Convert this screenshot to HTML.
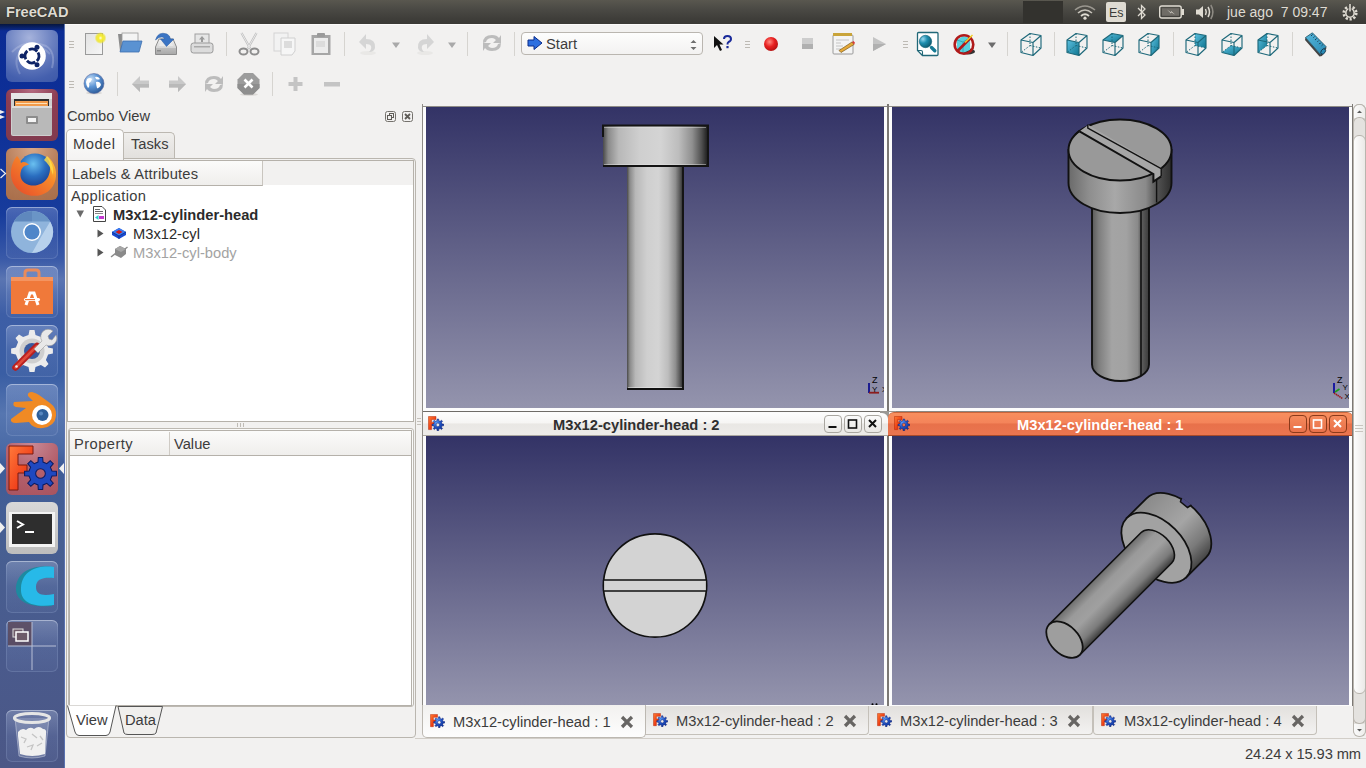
<!DOCTYPE html>
<html><head><meta charset="utf-8">
<style>
*{box-sizing:border-box;margin:0;padding:0}
html,body{width:1366px;height:768px;overflow:hidden;background:#f2f1f0;font-family:"Liberation Sans",sans-serif;color:#3c3c3c}
.a{position:absolute}
#panel{left:0;top:0;width:1366px;height:24px;background:linear-gradient(#59574f,#4a4944 40%,#3e3d39 80%,#3a3935)}
#launcher{left:0;top:24px;width:65px;height:744px;background:linear-gradient(180deg,#06163f 0px,#0b2c94 7px,#0e3098 100px,#173c9c 190px,#3a5aa8 235px,#5a75b2 255px,#3d5ea6 290px,#3a5ea4 350px,#5676b0 390px,#4a6aa6 425px,#3e5c98 440px,#475f92 520px,#4a5a8c 640px,#4b5786 744px);border-right:1px solid #5a72b0}
.tile{position:absolute;left:6px;width:52px;height:52px;border-radius:6px;overflow:hidden}
.t{position:absolute;white-space:nowrap;font-size:14.7px;line-height:1}
.sep{position:absolute;width:1px;background:#d6d4d0}
.grip{position:absolute;width:5px;height:8px;background:repeating-linear-gradient(#bdbab4 0 1px,transparent 1px 3px)}
.view{position:absolute;background:linear-gradient(#333366,#9494ad)}
.glass{background:linear-gradient(180deg,rgba(200,212,240,.30),rgba(140,160,210,.16) 50%,rgba(110,130,180,.14));box-shadow:inset 0 0 0 1px rgba(200,215,250,.16),inset 0 1px 0 rgba(255,255,255,.35)}
.tb{position:absolute;top:415px;width:18px;height:18px;border:1px solid #a9a6a0;border-radius:4px;background:linear-gradient(#fbfbfb,#e9e7e4)}
.tb.o{border-color:#8a3a1a;background:linear-gradient(#f58a5c,#e8714a)}
</style></head><body>
<svg width="0" height="0" style="position:absolute">
 <defs>
  <g id="fcicon"><defs><linearGradient id="fcF" x1="0" y1="0" x2="1" y2="1"><stop offset="0" stop-color="#ff7a30"/><stop offset="1" stop-color="#e01000"/></linearGradient><radialGradient id="fcG" cx=".35" cy=".3" r=".8"><stop offset="0" stop-color="#5a9af8"/><stop offset=".5" stop-color="#2050c0"/><stop offset="1" stop-color="#0a2a8a"/></radialGradient></defs><path d="M0.5 0.5 H8.5 V3.8 H3.8 V6.8 H6.5 V10 H3.8 V14.5 H0.5Z" fill="url(#fcF)" stroke="#b02000" stroke-width=".5"/><path fill="url(#fcG)" fill-rule="evenodd" stroke="#0a1a70" stroke-width=".5" d="M14.99 8.51 L16.74 8.64 L16.74 10.36 L14.99 10.49 L14.37 11.98 L15.52 13.30 L14.30 14.52 L12.98 13.37 L11.49 13.99 L11.36 15.74 L9.64 15.74 L9.51 13.99 L8.02 13.37 L6.70 14.52 L5.48 13.30 L6.63 11.98 L6.01 10.49 L4.26 10.36 L4.26 8.64 L6.01 8.51 L6.63 7.02 L5.48 5.70 L6.70 4.48 L8.02 5.63 L9.51 5.01 L9.64 3.26 L11.36 3.26 L11.49 5.01 L12.98 5.63 L14.30 4.48 L15.52 5.70 L14.37 7.02Z M12.4 9.5 A1.9 1.9 0 1 0 8.6 9.5 A1.9 1.9 0 1 0 12.4 9.5Z"/></g>
  <g id="tabx"><path d="M3.2 3.2 L10.8 10.8 M10.8 3.2 L3.2 10.8" stroke="#676563" stroke-width="3.3" stroke-linecap="square"/></g>
 </defs>
</svg>
<!-- top panel -->
<div id="panel" class="a">
  <div class="t" style="left:6px;top:5px;font-weight:bold;font-size:14.6px;color:#dfdbd2;text-shadow:0 0 1.5px rgba(0,0,0,.7)">FreeCAD</div>
  <div class="a" style="left:1023px;top:1px;width:40px;height:22px;background:#33322e"></div>
  <svg class="a" style="left:1074px;top:4px" width="22" height="16" viewBox="0 0 22 16"><path d="M1 6 Q11 -2 21 6" fill="none" stroke="#9a978f" stroke-width="1.6"/><path d="M4 9 Q11 3 18 9" fill="none" stroke="#c8c4bb" stroke-width="1.6"/><path d="M7 12 Q11 8.5 15 12" fill="none" stroke="#dfdbd2" stroke-width="1.8"/><circle cx="11" cy="14.2" r="1.6" fill="#dfdbd2"/></svg>
  <div class="a" style="left:1106px;top:2px;width:20px;height:20px;background:#dfdbd2;border-radius:2px"></div>
  <div class="t" style="left:1109px;top:7px;font-size:12.5px;color:#3c3b37">Es</div>
  <svg class="a" style="left:1136px;top:3px" width="11" height="18" viewBox="0 0 11 18"><path d="M2 5 L9 12 L5.5 15.5 V2.5 L9 6 L2 13" fill="none" stroke="#dfdbd2" stroke-width="1.3"/></svg>
  <svg class="a" style="left:1159px;top:5px" width="26" height="14" viewBox="0 0 26 14"><rect x="0.7" y="1" width="21.5" height="12" rx="2" fill="none" stroke="#dfdbd2" stroke-width="1.4"/><rect x="3" y="3.2" width="17" height="7.6" fill="#6f6c66"/><rect x="22.5" y="4" width="2.5" height="6" fill="#dfdbd2"/><path d="M8 4.5 L12 7.5 L12 6 L16 9.5 L12 7.2 L12 8.5Z" fill="#dfdbd2"/></svg>
  <svg class="a" style="left:1195px;top:3px" width="22" height="18" viewBox="0 0 22 18"><path d="M1 6.5 H4 L8 3 V15 L4 11.5 H1Z" fill="#dfdbd2"/><path d="M10.5 6 Q12 9 10.5 12" fill="none" stroke="#dfdbd2" stroke-width="1.5"/><path d="M13 4 Q16 9 13 14" fill="none" stroke="#dfdbd2" stroke-width="1.5"/><path d="M15.8 2 Q20 9 15.8 16" fill="none" stroke="#8e8b84" stroke-width="1.5"/></svg>
  <div class="t" style="left:1227px;top:5px;font-size:14px;color:#dfdbd2">jue ago&nbsp; 7 09:47</div>
  <svg class="a" style="left:1341px;top:3px" width="18" height="18" viewBox="0 0 18 18"><g transform="translate(9,10)"><circle r="6.3" fill="none" stroke="#dfdbd2" stroke-width="2.6" stroke-dasharray="2.2 1.75"/><circle r="4.2" fill="none" stroke="#dfdbd2" stroke-width="1.6"/><rect x="-1.6" y="-9" width="3.2" height="8" fill="#3f3e3a"/><rect x="-0.8" y="-9" width="1.6" height="7.5" fill="#dfdbd2"/></g></svg>
</div>
<!-- launcher -->
<div id="launcher" class="a">
 <!-- tile 1 dash -->
 <div class="tile" style="top:6px;background:radial-gradient(circle at 45% 15%,#a6b3dc,#6a80c0 45%,#4560ae 80%,#3d58a8)">
  <svg width="52" height="52" viewBox="0 0 52 52"><path d="M6 22 Q20 8 40 16 Q50 22 46 38" fill="none" stroke="#d0d8f0" stroke-opacity=".3" stroke-width="2"/><path d="M14 44 Q6 30 16 20 Q30 10 44 24" fill="none" stroke="#d0d8f0" stroke-opacity=".25" stroke-width="2"/><circle cx="26" cy="26" r="13.8" fill="#fff"/><circle cx="26" cy="26" r="6.9" fill="none" stroke="#0e2466" stroke-width="2.8" stroke-dasharray="9 1.9" transform="rotate(-30 26 26)"/><circle cx="16" cy="26" r="2.5" fill="#0e2466"/><circle cx="31" cy="17.3" r="2.5" fill="#0e2466"/><circle cx="31" cy="34.7" r="2.5" fill="#0e2466"/></svg>
 </div>
 <!-- tile 2 files -->
 <div class="tile" style="top:65px;background:radial-gradient(circle at 50% 0%,#b46b80,#8c3d53 45%,#7f3a4e)">
  <svg width="52" height="52" viewBox="0 0 52 52"><rect x="5" y="4" width="41" height="43" rx="2" fill="#cfcfcf"/><rect x="5" y="4" width="41" height="6" fill="#e6e6e6"/><rect x="8" y="10" width="35" height="8" fill="#2d2d2d"/><rect x="9" y="12" width="33" height="6" fill="#f29a4a"/><rect x="10" y="14" width="31" height="1" fill="#fde1b8"/><rect x="6" y="17" width="40" height="29" rx="1" fill="#b9b9b9"/><rect x="6" y="17" width="40" height="2" fill="#dcdcdc"/><rect x="20" y="27" width="12" height="8" rx="1" fill="#8c8c8c"/><rect x="22" y="29" width="8" height="4" fill="#f4f4f4"/></svg>
 </div>
 <!-- tile 3 firefox -->
 <div class="tile" style="top:124px;background:radial-gradient(circle at 50% 0%,#d8a888,#b67c58 50%,#a86e4a)">
  <svg width="52" height="52" viewBox="0 0 52 52"><defs><radialGradient id="ffg" cx=".45" cy=".3" r=".7"><stop offset="0" stop-color="#6ac0f0"/><stop offset=".5" stop-color="#2a6ec0"/><stop offset="1" stop-color="#1a3a8a"/></radialGradient><linearGradient id="fff" x1="1" y1="0" x2="0" y2="1"><stop offset="0" stop-color="#ffd23a"/><stop offset=".35" stop-color="#f7892a"/><stop offset="1" stop-color="#e4462a"/></linearGradient></defs><circle cx="29" cy="23" r="17.5" fill="url(#ffg)"/><path d="M11 8 C5 15 3 26 7 35 C12 45 24 50 35 47 C45 44 51 35 50 24 C49 17 46 12 41 8 C45 15 45 23 42 29 C38 36 30 39 23 37 C16 35 13 29 15 23 C16 19 19 17 23 17 C21 14 17 13 15 15 C14 12 13 10 11 8Z" fill="url(#fff)"/><path d="M41 8 C46 14 48 20 47 27 C45 20 42 15 38 12Z" fill="#ffe04a" opacity=".8"/></svg>
 </div>
 <!-- tile 4 chromium -->
 <div class="tile glass" style="top:183px">
  <svg width="52" height="52" viewBox="0 0 52 52"><circle cx="26" cy="25" r="21" fill="#8fb4dc"/><path d="M26 4 A21 21 0 0 1 44.2 14.5 L26 14.5 Z" fill="#6a95c6"/><path d="M7.8 14.5 A21 21 0 0 1 26 4 L26 14.5Z" fill="#5f88bd"/><path d="M44.2 14.5 A21 21 0 0 1 26 46 L35 30Z" fill="#b7d1ec"/><circle cx="26" cy="25" r="9" fill="#fff"/><circle cx="26" cy="25" r="7.5" fill="#4f86c9"/></svg>
 </div>
 <!-- tile 5 software center -->
 <div class="tile glass" style="top:242px">
  <svg width="52" height="52" viewBox="0 0 52 52"><path d="M19 13 V7 Q19 4 22 4 H30 Q33 4 33 7 V13" fill="none" stroke="#e98a5a" stroke-width="3"/><rect x="5" y="11" width="42" height="37" fill="#f0793a"/><rect x="5" y="11" width="42" height="4" fill="#f49460"/><path d="M20 39 L24 27 H28 L32 39" fill="none" stroke="#fff" stroke-width="3"/><rect x="18" y="32" width="16" height="3" rx="1.5" fill="#fff"/><rect x="19" y="33" width="10" height="1.2" fill="#f0793a"/></svg>
 </div>
 <!-- tile 6 settings -->
 <div class="tile glass" style="top:301px">
  <svg width="52" height="52" viewBox="0 0 52 52"><path d="M42.1 22.5 L46.9 23.5 L46.9 28.5 L42.1 29.5 L39.9 34.9 L42.5 39.0 L39.0 42.5 L34.9 39.9 L29.5 42.1 L28.5 46.9 L23.5 46.9 L22.5 42.1 L17.1 39.9 L13.0 42.5 L9.5 39.0 L12.1 34.9 L9.9 29.5 L5.1 28.5 L5.1 23.5 L9.9 22.5 L12.1 17.1 L9.5 13.0 L13.0 9.5 L17.1 12.1 L22.5 9.9 L23.5 5.1 L28.5 5.1 L29.5 9.9 L34.9 12.1 L39.0 9.5 L42.5 13.0 L39.9 17.1Z" fill="#ececec"/><circle cx="26" cy="26" r="12.5" fill="#cfcfcf"/><circle cx="26" cy="26" r="8" fill="#3a5a9e"/><path d="M9.5 42.5 L31 21" stroke="#b82020" stroke-width="6.5" stroke-linecap="round"/><path d="M9.5 42.5 L31 21" stroke="#e04a3a" stroke-width="2.5" stroke-linecap="round"/><circle cx="10.5" cy="41.5" r="1.3" fill="#f0f0f0"/><path d="M28 24 L36 16 A7.5 7.5 0 0 1 47 6 L42 11 L43 14 L46 15 L50 10 A7.5 7.5 0 0 1 40 20 L32 28Z" fill="#e8e8e8" stroke="#9a9a9a" stroke-width=".6"/></svg>
 </div>
 <!-- tile 7 blender -->
 <div class="tile glass" style="top:360px">
  <svg width="52" height="52" viewBox="0 0 52 52"><path d="M5 35 L20 24 L10 23 Q6 22 8 18 L27 17 L22 12 Q21 8 26 8 Q30 9 33 11 L44 19 Q51 24 50 32 Q49 42 37 44 Q27 45 23 38 L10 39 Q4 39 5 35Z" fill="#f08a24"/><circle cx="36" cy="31" r="10" fill="#fff"/><circle cx="36.5" cy="31" r="6" fill="#2d5f9a"/><circle cx="35" cy="29.5" r="2" fill="#6a9ad0" opacity=".7"/></svg>
 </div>
 <!-- tile 8 freecad -->
 <div class="tile" style="top:419px;background:radial-gradient(circle at 50% 0%,#c88a96,#b4606c 50%,#a85460)">
  <svg width="52" height="52" viewBox="0 0 52 52"><defs><linearGradient id="ltF" x1="0" y1="0" x2="1" y2="1"><stop offset="0" stop-color="#ff7a3a"/><stop offset="1" stop-color="#e8200a"/></linearGradient></defs><path d="M3 3 H27 V11 H12 V22 H21 V30 H12 H12 V47 H3Z" fill="url(#ltF)" stroke="#7a1a10" stroke-width="1"/><g transform="translate(34.5,30.5) scale(2.55) translate(-10.5,-9.5)"><path fill="#1f48c0" fill-rule="evenodd" stroke="#0a1a60" stroke-width=".4" d="M14.99 8.51 L16.74 8.64 L16.74 10.36 L14.99 10.49 L14.37 11.98 L15.52 13.30 L14.30 14.52 L12.98 13.37 L11.49 13.99 L11.36 15.74 L9.64 15.74 L9.51 13.99 L8.02 13.37 L6.70 14.52 L5.48 13.30 L6.63 11.98 L6.01 10.49 L4.26 10.36 L4.26 8.64 L6.01 8.51 L6.63 7.02 L5.48 5.70 L6.70 4.48 L8.02 5.63 L9.51 5.01 L9.64 3.26 L11.36 3.26 L11.49 5.01 L12.98 5.63 L14.30 4.48 L15.52 5.70 L14.37 7.02Z M12.4 9.5 A1.9 1.9 0 1 0 8.6 9.5 A1.9 1.9 0 1 0 12.4 9.5Z"/></g></svg>
 </div>
 <!-- tile 9 terminal -->
 <div class="tile" style="top:478px;background:linear-gradient(#d8d8d8,#bdbdbd)">
  <svg width="52" height="52" viewBox="0 0 52 52"><rect x="3" y="10" width="46" height="35" fill="#f3f3f3"/><rect x="6" y="12" width="40" height="30" fill="#2e2e2e"/><path d="M11 19 L17 22.5 L11 26" fill="none" stroke="#fff" stroke-width="2"/><rect x="19" y="29" width="9" height="2" fill="#fff"/></svg>
 </div>
 <!-- tile 10 C -->
 <div class="tile glass" style="top:537px">
  <svg width="52" height="52" viewBox="0 0 52 52"><path d="M46 6 C30 4 12 8 10 26 C9 40 22 47 46 45 L46 34 C34 36 26 35 26 26 C26 18 34 15 46 17Z" fill="#1d8aa0"/><path d="M48 6 C34 4 16 8 15 27 C14 41 26 47 48 44 L48 33 C37 35 30 34 30 26 C30 18 37 16 48 17Z" fill="#27b9e8"/></svg>
 </div>
 <!-- tile 11 workspaces -->
 <div class="tile glass" style="top:596px">
  <svg width="52" height="52" viewBox="0 0 52 52"><rect x="2" y="2" width="24" height="24" fill="#5a4658" opacity=".8"/><path d="M26 2 V50 M2 26 H50" stroke="#b8bfd6" stroke-width="1"/><rect x="7" y="9" width="10" height="8" fill="#6d5a68" stroke="#ddd" stroke-width="1"/><rect x="10" y="12" width="12" height="9" fill="#6d5a68" stroke="#fff" stroke-width="1.5"/></svg>
 </div>
 <!-- trash -->
 <div class="tile glass" style="top:686px">
  <svg width="52" height="52" viewBox="0 0 52 52"><path d="M9 8 L13 46 Q26 50 39 46 L43 8Z" fill="#c8d0e4" opacity=".25"/><path d="M9 8 L13 46 Q26 50 39 46 L43 8" fill="none" stroke="#dfe4f0" stroke-opacity=".45" stroke-width="1"/><ellipse cx="26" cy="8" rx="17.5" ry="4.5" fill="none" stroke="#e6e6e6" stroke-width="3.2"/><path d="M12 22 Q16 17 20 20 Q24 16 28 19 Q33 15 37 19 Q41 19 40 24 L39 44 Q26 48 14 44 L12 26Z" fill="#f0f0f0"/><path d="M15 27 L20 29 L18 33 M26 24 L31 28 M21 37 L27 35 L25 40 M31 36 L36 33 M34 26 L37 30" fill="none" stroke="#c4c4c4" stroke-width="1.3"/></svg>
 </div>
 <!-- indicators -->
 <svg class="a" style="left:0;top:86px" width="6" height="10"><path d="M0 0 L5 2 L0 4Z M0 5 L5 7 L0 9Z" fill="#f0f0f0"/></svg>
 <svg class="a" style="left:0;top:144px" width="7" height="11"><path d="M0.5 1 L5.5 5.5 L0.5 10" fill="none" stroke="#f0f0f0" stroke-width="1.2"/></svg>
 <svg class="a" style="left:0;top:439px" width="6" height="11"><path d="M0 0 L5 5.5 L0 11Z" fill="#f0f0f0"/></svg>
 <svg class="a" style="left:59px;top:439px" width="6" height="11"><path d="M5 0 L0 5.5 L5 11Z" fill="#f0f0f0"/></svg>
 <svg class="a" style="left:0;top:498px" width="6" height="11"><path d="M0 0 L5 5.5 L0 11Z" fill="#f0f0f0"/></svg>
</div>
<div class="a" style="left:65px;top:24px;width:1301px;height:1px;background:#fbfaf9"></div>
<!-- toolbars -->
<svg width="0" height="0" style="position:absolute">
 <defs>
  <linearGradient id="tealg" x1="0" y1="0" x2="1" y2="1"><stop offset="0" stop-color="#5cc0e0"/><stop offset="1" stop-color="#0f7590"/></linearGradient>
  <radialGradient id="redg" cx=".4" cy=".35" r=".7"><stop offset="0" stop-color="#ff8a80"/><stop offset=".5" stop-color="#e82020"/><stop offset="1" stop-color="#b01010"/></radialGradient>
  <radialGradient id="globeg" cx=".35" cy=".3" r=".8"><stop offset="0" stop-color="#cfe3f7"/><stop offset=".45" stop-color="#5d95d5"/><stop offset="1" stop-color="#24518f"/></radialGradient>
  <g id="cubeE" fill="none" stroke="#1d687a" stroke-width="1.15" stroke-linejoin="round">
   <path d="M1 8 L10 1.5 L21 3.5 L21 16 L13 23.5 L1 20.5Z M1 8 L13 10.5 L21 3.5 M13 10.5 L13 23.5"/>
   <path d="M10 1.5 L10 13.5 L21 16 M10 13.5 L1 20.5" stroke-dasharray="1.5 1.5" stroke-width="1"/>
  </g>
 </defs>
</svg>
<div class="grip" style="left:69px;top:41px"></div>
<!-- new -->
<svg class="a" style="left:84px;top:32px" width="22" height="24" viewBox="0 0 22 24"><defs><radialGradient id="sun"><stop offset="0" stop-color="#fffbe0"/><stop offset=".35" stop-color="#f7ee30"/><stop offset=".7" stop-color="#eee42a" stop-opacity=".8"/><stop offset="1" stop-color="#eee42a" stop-opacity="0"/></radialGradient><linearGradient id="pap" x1="0" y1="0" x2="1" y2="1"><stop offset="0" stop-color="#e2e2e2"/><stop offset="1" stop-color="#f6f6f6"/></linearGradient></defs><rect x="1.5" y="1.5" width="17" height="21" fill="url(#pap)" stroke="#9a9a9a" stroke-width="1"/><circle cx="16.5" cy="6" r="6" fill="url(#sun)"/></svg>
<!-- open -->
<svg class="a" style="left:117px;top:32px" width="26" height="22" viewBox="0 0 26 22"><path d="M1 2 H7 L9 4 H20 V19 H3Z" fill="#8c8c8c"/><rect x="5" y="1" width="16" height="12" fill="#f4f4f4" stroke="#9a9a9a" stroke-width=".8"/><path d="M3 20 L6 9 H25 L22 20Z" fill="#5a92d2" stroke="#3d6fae" stroke-width=".8"/></svg>
<!-- save -->
<svg class="a" style="left:154px;top:32px" width="24" height="24" viewBox="0 0 24 24"><defs><linearGradient id="drv" x1="0" y1="0" x2="0" y2="1"><stop offset="0" stop-color="#f4f4f4"/><stop offset=".55" stop-color="#d6d6d6"/><stop offset=".6" stop-color="#bdbdbd"/><stop offset="1" stop-color="#a8a8a8"/></linearGradient></defs><path d="M1.5 15 L5 7 H19 L22.5 15 V22.5 H1.5Z" fill="url(#drv)" stroke="#8c8c8c" stroke-width="1"/><path d="M5 14 L7 9 H17 L19 14Z" fill="#e9e9e9"/><rect x="3" y="18" width="4" height="1.5" fill="#8a8a8a"/><path d="M1.5 8 Q4 -1 13 2 Q16 3.5 16.5 7 L20 7 L12.5 14.5 L6.5 7 L10.5 7 Q10 4 5 5.5Z" fill="#3a74c4" stroke="#2a5aa0" stroke-width=".5"/></svg>
<!-- save as -->
<svg class="a" style="left:190px;top:33px" width="24" height="22" viewBox="0 0 24 22"><rect x="5" y="1" width="14" height="10" fill="#e6e6e6" stroke="#a0a0a0" stroke-width="1"/><path d="M12 3 L15 6.5 H13 V9 H11 V6.5 H9Z" fill="#9a9a9a"/><rect x="1" y="10" width="22" height="10" rx="2.5" fill="#dcdcdc" stroke="#9a9a9a" stroke-width="1"/><rect x="4" y="13" width="16" height="1.5" fill="#aaa"/></svg>
<div class="sep" style="left:226px;top:32px;height:24px"></div>
<!-- cut -->
<svg class="a" style="left:238px;top:32px" width="22" height="24" viewBox="0 0 22 24"><path d="M3.5 1 L12.5 17 M18.5 1 L9.5 17" stroke="#bdbdbd" stroke-width="2.2"/><path d="M3.5 1 L12.5 17 M18.5 1 L9.5 17" stroke="#e9e9e9" stroke-width="1"/><ellipse cx="5.5" cy="19.5" rx="4" ry="3" fill="none" stroke="#8d8d8d" stroke-width="2"/><ellipse cx="16.5" cy="19.5" rx="4" ry="3" fill="none" stroke="#8d8d8d" stroke-width="2"/></svg>
<!-- copy -->
<svg class="a" style="left:273px;top:32px" width="24" height="24" viewBox="0 0 24 24"><rect x="1" y="1" width="14" height="18" fill="#f2f2f2" stroke="#d4d4d4" stroke-width="1"/><path d="M8 6 H22 V19 L19 23 H8Z" fill="#f6f6f6" stroke="#d0d0d0" stroke-width="1"/><rect x="11" y="9" width="8" height="7" fill="#dcdcdc"/></svg>
<!-- paste -->
<svg class="a" style="left:310px;top:32px" width="22" height="24" viewBox="0 0 22 24"><rect x="1.5" y="3" width="19" height="20" fill="#a6a6a6"/><rect x="4" y="6" width="14" height="15" fill="#ececec"/><rect x="7" y="1" width="8" height="4" rx="1" fill="#9a9a9a"/><rect x="6" y="9" width="9" height="6" fill="#dcdcdc"/></svg>
<div class="sep" style="left:344px;top:32px;height:24px"></div>
<!-- undo -->
<svg class="a" style="left:358px;top:32px" width="20" height="24" viewBox="0 0 20 24"><ellipse cx="10" cy="21" rx="8" ry="2" fill="#e9e8e6"/><path d="M1 10 L8 2 V7 Q18 7 17 16 Q16 20 11 20 Q14 17 13 14 Q12 12 8 12 V17Z" fill="#d5d5d5"/></svg>
<svg class="a" style="left:392px;top:42px" width="9" height="7"><path d="M0 0.5 H8 L4 6Z" fill="#a9a9a9"/></svg>
<!-- redo -->
<svg class="a" style="left:415px;top:32px" width="20" height="24" viewBox="0 0 20 24"><ellipse cx="10" cy="21" rx="8" ry="2" fill="#e9e8e6"/><path d="M19 10 L12 2 V7 Q2 7 3 16 Q4 20 9 20 Q6 17 7 14 Q8 12 12 12 V17Z" fill="#d5d5d5"/></svg>
<svg class="a" style="left:448px;top:42px" width="9" height="7"><path d="M0 0.5 H8 L4 6Z" fill="#a9a9a9"/></svg>
<div class="sep" style="left:467px;top:32px;height:24px"></div>
<!-- refresh -->
<svg class="a" style="left:481px;top:32px" width="22" height="22" viewBox="0 0 22 22"><path d="M2 11 Q2 3 11 3 Q16 3 18 6 L20 3 V11 H12 L15 8 Q13 6 11 6 Q6 6 5 10Z" fill="#bcbcbc"/><path d="M20 11 Q20 19 11 19 Q6 19 4 16 L2 19 V11 H10 L7 14 Q9 16 11 16 Q16 16 17 12Z" fill="#bcbcbc"/></svg>
<div class="sep" style="left:514px;top:32px;height:24px"></div>
<!-- combo -->
<div class="a" style="left:521px;top:32px;width:182px;height:23px;border:1px solid #bab6b0;border-radius:4px;background:linear-gradient(#fdfdfd,#f3f2f1)"></div>
<svg class="a" style="left:527px;top:36px" width="16" height="14" viewBox="0 0 16 14"><path d="M1 4 H7 V0.5 L15 7 L7 13.5 V10 H1Z" fill="#2d6fe0" stroke="#0a2a8a" stroke-width="1"/></svg>
<div class="t" style="left:546px;top:37px;color:#3c3c3c">Start</div>
<svg class="a" style="left:690px;top:39px" width="8" height="12"><path d="M0.5 4 L3.5 1 L6.5 4Z M0.5 8 L3.5 11 L6.5 8Z" fill="#6e6e6e"/></svg>
<!-- whats this -->
<svg class="a" style="left:713px;top:35px" width="19" height="17" viewBox="0 0 19 17"><path d="M1 1 L1 13 L4 10 L7 16 L9 15 L6.5 9.5 L10.5 9.5Z" fill="#111"/><path d="M11 4 Q11 1 14.5 1 Q18 1 18 4 Q18 6 15.5 7 Q14.5 7.6 14.5 9.5" fill="none" stroke="#1a2a9a" stroke-width="2"/><rect x="13.4" y="11" width="2.2" height="2.2" fill="#1a2a9a"/></svg>
<div class="grip" style="left:745px;top:41px"></div>
<!-- record -->
<svg class="a" style="left:763px;top:36px" width="16" height="16"><circle cx="8" cy="8" r="7" fill="url(#redg)"/></svg>
<!-- stop -->
<svg class="a" style="left:801px;top:37px" width="13" height="14"><rect x="1" y="1" width="11" height="11" fill="#cdcdcd"/><rect x="1" y="7" width="11" height="5" fill="#b0b0b0"/></svg>
<!-- macro edit -->
<svg class="a" style="left:831px;top:32px" width="26" height="24" viewBox="0 0 26 24"><rect x="2" y="3" width="20" height="19" rx="1" fill="#f4f4f4" stroke="#9a9a9a" stroke-width="1"/><rect x="2" y="1" width="19" height="3" fill="#c9a43a"/><path d="M5 8 H18 M5 11 H10 M5 14 H12 M5 17 H10" stroke="#c4c4c4" stroke-width="1"/><path d="M8 18.5 L21 10 L23 12.5 L10 20.5Z" fill="#e6a93a" stroke="#7a5a1a" stroke-width=".7"/><path d="M21 10 L23 12.5 L24 10.8 L22.5 9Z" fill="#d83a3a"/></svg>
<!-- play -->
<svg class="a" style="left:872px;top:36px" width="15" height="16"><path d="M1 1 L14 8 L1 15Z" fill="#c4c4c4"/><path d="M1 8 L14 8 L1 15Z" fill="#b0b0b0"/></svg>
<div class="grip" style="left:903px;top:41px"></div>
<!-- fit all -->
<svg class="a" style="left:916px;top:31px" width="24" height="26" viewBox="0 0 24 26"><defs><radialGradient id="lens" cx=".3" cy=".3" r=".75"><stop offset="0" stop-color="#9ad8f0"/><stop offset=".45" stop-color="#1f8fb0"/><stop offset="1" stop-color="#0c5a70"/></radialGradient></defs><path d="M2.5 1.5 H21 Q22 1.5 22 2.5 V23.5 Q22 24.5 21 24.5 H6.5 L1.5 19.5 V2.5 Q1.5 1.5 2.5 1.5Z" fill="#fff" stroke="#216878" stroke-width="1.3"/><path d="M1.5 19.5 H5 Q6.5 19.5 6.5 21 V24.5" fill="none" stroke="#216878" stroke-width="1.1"/><circle cx="9.5" cy="10.5" r="6.2" fill="url(#lens)" stroke="#0f5f74" stroke-width=".6"/><path d="M15.5 16.5 L18.8 19.8" stroke="#157a94" stroke-width="3.4" stroke-linecap="round"/></svg>
<!-- draw style -->
<svg class="a" style="left:953px;top:33px" width="23" height="23" viewBox="0 0 23 23"><ellipse cx="15" cy="18.5" rx="7" ry="3" fill="#333"/><path d="M4 7 L10 3 L17 5 L17 17 L10 20 L4 17Z" fill="#5ad0dc"/><path d="M4 7 L10 9 L17 5 M10 9 V20" stroke="#2aa0b0" stroke-width=".8" fill="none"/><circle cx="11" cy="11.5" r="9.3" fill="none" stroke="#b01a1a" stroke-width="2.6"/><path d="M4.5 18 L17.5 5" stroke="#b01a1a" stroke-width="2.6"/><path d="M12 9.5 L19.5 2" stroke="#f0d020" stroke-width="1.5"/></svg>
<svg class="a" style="left:988px;top:42px" width="9" height="7"><path d="M0 0.5 H8 L4 6Z" fill="#6c6c6c"/></svg>
<div class="sep" style="left:1007px;top:32px;height:24px"></div>
<!-- cubes -->
<svg class="a" style="left:1020px;top:32px" width="22" height="25" viewBox="0 0 22 25"><use href="#cubeE"/></svg>
<div class="sep" style="left:1054px;top:32px;height:24px"></div>
<svg class="a" style="left:1066px;top:32px" width="22" height="25" viewBox="0 0 22 25"><path d="M1 8 L13 10.5 L13 23.5 L1 20.5Z" fill="url(#tealg)"/><use href="#cubeE"/></svg>
<svg class="a" style="left:1102px;top:32px" width="22" height="25" viewBox="0 0 22 25"><path d="M1 8 L10 1.5 L21 3.5 L13 10.5Z" fill="url(#tealg)"/><use href="#cubeE"/></svg>
<svg class="a" style="left:1138px;top:32px" width="22" height="25" viewBox="0 0 22 25"><path d="M13 10.5 L21 3.5 L21 16 L13 23.5Z" fill="url(#tealg)"/><use href="#cubeE"/></svg>
<div class="sep" style="left:1173px;top:32px;height:24px"></div>
<svg class="a" style="left:1185px;top:32px" width="22" height="25" viewBox="0 0 22 25"><path d="M10 1.5 L21 3.5 L21 16 L10 13.5Z" fill="url(#tealg)"/><use href="#cubeE"/></svg>
<svg class="a" style="left:1221px;top:32px" width="22" height="25" viewBox="0 0 22 25"><path d="M1 20.5 L10 13.5 L21 16 L13 23.5Z" fill="url(#tealg)"/><use href="#cubeE"/></svg>
<svg class="a" style="left:1257px;top:32px" width="22" height="25" viewBox="0 0 22 25"><path d="M1 8 L10 1.5 L10 13.5 L1 20.5Z" fill="url(#tealg)"/><use href="#cubeE"/></svg>
<div class="sep" style="left:1292px;top:32px;height:24px"></div>
<!-- measure -->
<svg class="a" style="left:1304px;top:32px" width="25" height="26" viewBox="0 0 25 26"><defs><linearGradient id="rul" x1="0" y1="0" x2="1" y2="1"><stop offset="0" stop-color="#56b8dc"/><stop offset="1" stop-color="#2a8ab4"/></linearGradient></defs><path d="M1.5 5.5 L1 8 L15.5 24.5 L18 24 L22.5 16 L22 14.5 L16.5 22.5Z" fill="#444"/><path d="M1.5 5.5 L8.4 0.8 L22 14.5 L16.5 22.5Z" fill="url(#rul)" stroke="#1b4f64" stroke-width=".8"/><path d="M8.5 2.5 L7.2 3.8 M10.5 4.6 L9.6 5.5 M12.5 6.6 L11.2 7.9 M14.5 8.7 L13.6 9.6 M16.6 10.8 L15.3 12.1 M18.6 12.8 L17.7 13.7" stroke="#123" stroke-width="1"/><ellipse cx="19.2" cy="19.5" rx="2" ry="3" transform="rotate(35 19.2 19.5)" fill="#2a8ab4" stroke="#123" stroke-width=".7"/></svg>
<!-- row 2 -->
<div class="grip" style="left:69px;top:81px"></div>
<svg class="a" style="left:83px;top:73px" width="22" height="22" viewBox="0 0 22 22"><ellipse cx="11" cy="20" rx="8" ry="1.5" fill="#d8d6d3"/><circle cx="11" cy="10.5" r="10" fill="url(#globeg)" stroke="#5a6aa0" stroke-width=".6"/><path d="M4 6 Q7 4 9 6 Q8 9 6 10 Q7 14 5 15 Q3 12 3 9Z M12 4 Q15 3 17 6 Q15 7 13 6Z M13 9 Q17 8 18 12 Q16 16 14 15 Q13 12 13 9Z" fill="#fff"/></svg>
<div class="sep" style="left:117px;top:72px;height:24px"></div>
<svg class="a" style="left:131px;top:75px" width="19" height="19" viewBox="0 0 19 19"><path d="M1 9 L9 1 V5.5 H18 V12.5 H9 V17Z" fill="#c9c9c9"/><path d="M1 9 H18 V12.5 H9 V17Z" fill="#b9b9b9"/></svg>
<svg class="a" style="left:168px;top:75px" width="19" height="19" viewBox="0 0 19 19"><path d="M18 9 L10 1 V5.5 H1 V12.5 H10 V17Z" fill="#c9c9c9"/><path d="M18 9 H1 V12.5 H10 V17Z" fill="#b9b9b9"/></svg>
<svg class="a" style="left:203px;top:73px" width="22" height="22" viewBox="0 0 22 22"><path d="M2 11 Q2 3 11 3 Q16 3 18 6 L20 3 V11 H12 L15 8 Q13 6 11 6 Q6 6 5 10Z" fill="#bcbcbc"/><path d="M20 11 Q20 19 11 19 Q6 19 4 16 L2 19 V11 H10 L7 14 Q9 16 11 16 Q16 16 17 12Z" fill="#bcbcbc"/></svg>
<svg class="a" style="left:237px;top:72px" width="24" height="24" viewBox="0 0 24 24"><ellipse cx="12" cy="22.5" rx="9" ry="1.5" fill="#dcdad7"/><path d="M7 1 H16 L22.5 7.5 V16 L16 22.5 H7 L0.5 16 V7.5Z" fill="#9c9c9c"/><path d="M0.5 12 H22.5 V16 L16 22.5 H7 L0.5 16Z" fill="#8e8e8e"/><path d="M7.5 7.5 L15.5 15.5 M15.5 7.5 L7.5 15.5" stroke="#fff" stroke-width="2.6"/></svg>
<div class="sep" style="left:272px;top:72px;height:24px"></div>
<svg class="a" style="left:288px;top:77px" width="15" height="15"><rect x="0.5" y="5" width="14" height="4" fill="#c4c4c4"/><rect x="5.5" y="0" width="4" height="14" fill="#c4c4c4"/></svg>
<svg class="a" style="left:324px;top:82px" width="17" height="5"><rect x="0" y="0" width="16" height="4.5" fill="#c4c4c4"/></svg>
<!-- combo view -->
<div class="t" style="left:67px;top:109px">Combo View</div>
<svg class="a" style="left:384px;top:110px" width="13" height="13" viewBox="0 0 13 13"><rect x="1.5" y="1.5" width="10" height="10" rx="2" fill="none" stroke="#75726d" stroke-width="1"/><rect x="5.5" y="3.5" width="4" height="4" fill="none" stroke="#5f5c57" stroke-width="1"/><rect x="3.5" y="5.5" width="4" height="4" fill="#f2f1f0" stroke="#5f5c57" stroke-width="1"/></svg>
<svg class="a" style="left:401px;top:110px" width="13" height="13" viewBox="0 0 13 13"><rect x="1.5" y="1.5" width="10" height="10" rx="2" fill="none" stroke="#75726d" stroke-width="1"/><path d="M4 4 L9 9 M9 4 L4 9" stroke="#5f5c57" stroke-width="1.8"/></svg>
<!-- tabs -->
<div class="a" style="left:66px;top:129px;width:58px;height:31px;border:1px solid #bcb8b1;border-bottom:none;border-radius:5px 5px 0 0;background:linear-gradient(#fdfdfd,#f4f3f2)"></div>
<div class="a" style="left:124px;top:132px;width:51px;height:27px;border:1px solid #bcb8b1;border-bottom:none;border-left:none;border-radius:0 5px 0 0;background:linear-gradient(#efeeec,#e2e0dd)"></div>
<div class="t" style="left:73px;top:137px;letter-spacing:.5px">Model</div>
<div class="t" style="left:131px;top:137px">Tasks</div>
<!-- pane frame -->
<div class="a" style="left:66px;top:158px;width:350px;height:580px;border:1px solid #bab6af;border-radius:0 4px 4px 4px"></div>
<div class="a" style="left:67px;top:158px;width:56px;height:2px;background:#f4f3f2"></div>
<!-- tree -->
<div class="a" style="left:67px;top:160px;width:347px;height:262px;border:1px solid #b5b1aa;background:#fff"></div>
<div class="a" style="left:68px;top:161px;width:345px;height:24px;background:#f2f1f0"></div>
<div class="a" style="left:68px;top:161px;width:195px;height:25px;border-right:1px solid #c9c5bf;border-bottom:1px solid #b5b1aa;background:linear-gradient(#fbfbfa,#efeeec)"></div>
<div class="t" style="left:72px;top:167px;letter-spacing:.2px">Labels &amp; Attributes</div>
<div class="t" style="left:71px;top:189px;letter-spacing:.3px">Application</div>
<svg class="a" style="left:76px;top:210px" width="9" height="8"><path d="M0.5 0.5 H8 L4.25 7.5Z" fill="#6a6a6a"/></svg>
<svg class="a" style="left:93px;top:206px" width="13" height="16" viewBox="0 0 13 16"><path d="M0.5 0.5 H9 L12.5 4 V15.5 H0.5Z" fill="#fff" stroke="#444" stroke-width="1"/><rect x="2" y="3" width="5" height="1" fill="#666"/><rect x="2" y="5" width="8" height="1" fill="#666"/><rect x="2" y="7" width="8" height="1" fill="#888"/><rect x="6" y="10" width="5" height="3" fill="#c43ad0"/><path d="M2 11.5 L5.5 9 V14Z" fill="#2ad0d0"/></svg>
<div class="t" style="left:113px;top:208px;font-weight:bold;color:#2b2b2b">M3x12-cylinder-head</div>
<svg class="a" style="left:97px;top:229px" width="7" height="9"><path d="M0.5 0.5 L6.5 4.5 L0.5 8.5Z" fill="#555"/></svg>
<svg class="a" style="left:111px;top:227px" width="16" height="13" viewBox="0 0 16 13"><path d="M1 5 L8 1 L15 5 L15 8 L8 12 L1 8Z" fill="#1a4ad0"/><path d="M1 5 L8 1 L15 5 L8 9Z" fill="#3a7af0"/><path d="M4.5 5 L8 3 L11.5 5 L8 7Z" fill="#d01a1a"/><path d="M1 5 L8 9 L15 5 M8 9 V12" fill="none" stroke="#0a2a80" stroke-width=".7"/></svg>
<div class="t" style="left:133px;top:227px;color:#2b2b2b">M3x12-cyl</div>
<svg class="a" style="left:97px;top:248px" width="7" height="9"><path d="M0.5 0.5 L6.5 4.5 L0.5 8.5Z" fill="#555"/></svg>
<svg class="a" style="left:110px;top:245px" width="18" height="14" viewBox="0 0 18 14"><path d="M1 12 L6 8" stroke="#8a8a8a" stroke-width="1.5"/><path d="M5 4 L10 1 L16 4 V9 L11 13 L5 10Z" fill="#8a8a8a"/><path d="M5 4 L10 1 L16 4 L11 7Z" fill="#a6a6a6"/><path d="M15 4 L17.5 2" stroke="#8a8a8a" stroke-width="1.5"/></svg>
<div class="t" style="left:133px;top:246px;color:#a3a3a3">M3x12-cyl-body</div>
<!-- splitter grip -->
<div class="a" style="left:237px;top:423px;width:8px;height:4px;background:repeating-linear-gradient(90deg,#bfbbb5 0 1px,transparent 1px 3px)"></div>
<div class="a" style="left:417px;top:418px;width:4px;height:7px;background:repeating-linear-gradient(#c4c0ba 0 1px,transparent 1px 3px)"></div>
<!-- property -->
<div class="a" style="left:68px;top:428px;width:346px;height:279px;border:1px solid #bdb9b2;border-radius:3px;background:#fbfbfa"></div>
<div class="a" style="left:69px;top:430px;width:343px;height:276px;border:1px solid #b5b1aa;background:#fff"></div>
<div class="a" style="left:70px;top:431px;width:341px;height:25px;border-bottom:1px solid #b5b1aa;background:linear-gradient(#fbfbfa,#efeeec)"></div>
<div class="a" style="left:169px;top:432px;width:1px;height:23px;background:#cfcbc5"></div>
<div class="t" style="left:74px;top:437px;letter-spacing:.45px">Property</div>
<div class="t" style="left:174px;top:437px">Value</div>
<!-- bottom tabs -->
<svg class="a" style="left:66px;top:704px" width="110" height="34" viewBox="0 0 110 34"><path d="M50 2 L44 28 Q43 30.5 40 30.5 H20 Q17 30.5 16 28 L12 18" fill="none"/><path d="M52 2.5 L96.5 2.5 L90 29 Q89 30.5 86 30.5 H62 Q59 30.5 58 29Z" fill="#f0efed" stroke="#555" stroke-width="1"/><path d="M1.5 1.5 L9 28 Q10 31.5 13 31.5 H40 Q43 31.5 44 28 L50 1.5" fill="#fff" stroke="#555" stroke-width="1"/></svg>
<div class="t" style="left:76px;top:713px">View</div>
<div class="t" style="left:125px;top:713px">Data</div>
<!-- MDI area -->
<div class="a" style="left:422px;top:104px;width:1px;height:602px;background:#8e8b86"></div>
<div class="a" style="left:422px;top:106px;width:931px;height:1px;background:#8e8b86"></div>
<div class="a" style="left:423px;top:107px;width:930px;height:599px;background:#f6f5f4"></div>
<!-- subwindow frames -->
<div class="a" style="left:423px;top:107px;width:464px;height:306px;background:#fcfcfc;border-bottom:1px solid #b9b6b1"></div><div class="a" style="left:423px;top:411px;width:930px;height:1px;background:#6f6c68"></div>
<div class="a" style="left:887px;top:104px;width:2px;height:602px;background:#7c7975"></div>
<div class="a" style="left:889px;top:107px;width:464px;height:305px;background:#fcfcfc;border-right:1px solid #8a8782;border-bottom:1px solid #8a8782"></div>
<div class="view" style="left:426px;top:107px;width:458px;height:301px"></div>
<div class="view" style="left:892px;top:107px;width:457px;height:301px"></div>
<!-- bottom-left subwindow -->
<div class="a" style="left:423px;top:412px;width:464px;height:294px;background:#fcfcfc"></div>
<div class="a" style="left:880px;top:411px;width:16px;height:8px;background:#9a9894"></div><div class="a" style="left:423px;top:413px;width:465px;height:23px;border-radius:5px 6px 0 0;background:linear-gradient(#fdfdfd 0,#f6f5f4 45%,#e9e7e4 50%,#edebe9 100%);border-bottom:1px solid #aaa6a0"></div>
<div class="view" style="left:426px;top:436px;width:458px;height:269px"></div>
<div class="t" style="left:553px;top:418px;font-weight:bold;color:#2f2f2f">M3x12-cylinder-head : 2</div>
<!-- bottom-right subwindow -->
<div class="a" style="left:889px;top:412px;width:464px;height:294px;background:#fcfcfc"></div>
<div class="a" style="left:888px;top:412px;width:465px;height:24px;border-radius:6px 6px 0 0;background:linear-gradient(#f88f5e 0,#f4845a 45%,#e8714a 50%,#ea7550 100%);border-bottom:1px solid #a84a2a;border-top:1px solid #c9643a"></div>
<div class="view" style="left:892px;top:436px;width:457px;height:269px"></div>
<div class="t" style="left:1017px;top:418px;font-weight:bold;color:#fff">M3x12-cylinder-head : 1</div>
<!-- 3D models -->
<svg class="a" style="left:426px;top:107px" width="458" height="301" viewBox="426 107 458 301">
 <defs>
  <linearGradient id="cylA" x1="0" x2="1" y1="0" y2="0"><stop offset="0" stop-color="#4a4a4a"/><stop offset=".05" stop-color="#8a8a8a"/><stop offset=".15" stop-color="#b8b8b8"/><stop offset=".35" stop-color="#cfcfcf"/><stop offset=".55" stop-color="#d4d4d4"/><stop offset=".72" stop-color="#bdbdbd"/><stop offset=".85" stop-color="#8f8f8f"/><stop offset=".94" stop-color="#4f4f4f"/><stop offset="1" stop-color="#1a1a1a"/></linearGradient>
 </defs>
 <rect x="627" y="166" width="57" height="224" fill="url(#cylA)"/>
 <path d="M683 166 V389" stroke="#151515" stroke-width="2"/>
 <path d="M627 389 H684" stroke="#111" stroke-width="2.2"/>
 <path d="M628 387.5 H682" stroke="#ececec" stroke-width="1" opacity=".5"/>
 <rect x="603" y="126" width="105" height="40" fill="url(#cylA)"/>
 <path d="M602 125.5 H708 V166 H603" fill="none" stroke="#141414" stroke-width="2"/>
 <path d="M603 125 V137" stroke="#141414" stroke-width="2"/>
 <path d="M604 127.5 H706 M604 164.5 H706" stroke="#e6e6e6" stroke-width="1" opacity=".45"/>
 <!-- axis -->
 <path d="M869 383 V393" stroke="#1c1c90" stroke-width="2"/><path d="M869 392.7 H879" stroke="#8c1c1c" stroke-width="1.8"/>
 <text x="872" y="383" font-family="Liberation Sans" font-size="9" fill="#000">Z</text><text x="872" y="392" font-family="Liberation Sans" font-size="8" fill="#000">Y</text><text x="882" y="392" font-family="Liberation Sans" font-size="8" fill="#000">X</text>
</svg>
<svg class="a" style="left:892px;top:107px" width="457" height="301" viewBox="892 107 457 301">
 <defs>
  <linearGradient id="cylB" x1="0" x2="1" y1="0" y2="0"><stop offset="0" stop-color="#5a5a5a"/><stop offset=".12" stop-color="#7e7e7e"/><stop offset=".35" stop-color="#a4a4a4"/><stop offset=".6" stop-color="#a2a2a2"/><stop offset=".8" stop-color="#8a8a8a"/><stop offset=".86" stop-color="#606060"/><stop offset="1" stop-color="#3a3a3a"/></linearGradient>
  <linearGradient id="cylC" x1="0" x2="1" y1="0" y2="0"><stop offset="0" stop-color="#6a6a6a"/><stop offset=".2" stop-color="#8e8e8e"/><stop offset=".45" stop-color="#a8a8a8"/><stop offset=".75" stop-color="#8a8a8a"/><stop offset=".85" stop-color="#555"/><stop offset="1" stop-color="#2e2e2e"/></linearGradient>
 </defs>
 <!-- shaft -->
 <path d="M1092 200 V364.5 A28.5 16.5 0 0 0 1149 364.5 V200Z" fill="url(#cylB)" stroke="#111" stroke-width="1.9"/>
 <path d="M1141 210 V376" stroke="#111" stroke-width="1.6"/>
 <!-- head side -->
 <path d="M1068.5 150 V183 A51.5 30 0 0 0 1171.5 183 V150Z" fill="url(#cylC)" stroke="#111" stroke-width="1.9"/>
 <path d="M1156.6 180 V202.5" stroke="#111" stroke-width="1.4"/>
 <!-- head top -->
 <ellipse cx="1120" cy="150" rx="51.5" ry="30.5" fill="#999" stroke="#111" stroke-width="1.9"/>
 <!-- slot -->
 <path d="M1079.3 131.5 L1088.3 125 L1161.3 167.8 L1161.3 176.5 L1153.3 181.8 L1153.3 173.8Z" fill="#a6a6a6"/>
 <path d="M1087.8 124.5 V128.2 L1161.2 168.6 V176.3" fill="none" stroke="#111" stroke-width="1.4"/>
 <path d="M1079.5 131.3 L1153.4 174 V181.6 L1161.2 176.3" fill="none" stroke="#111" stroke-width="2"/>
 <path d="M1075 134.5 L1079.5 130.5" stroke="#111" stroke-width="1.6"/>
 <!-- axis -->
 <path d="M1334 383 V393" stroke="#1a1aa0" stroke-width="2"/><path d="M1335 392 L1339.5 389" stroke="#1a9a1a" stroke-width="1.6"/><path d="M1334 393 L1342.5 398.5" stroke="#9a1a1a" stroke-width="1.6" stroke-dasharray="1.5 .6"/>
 <text x="1337" y="383" font-family="Liberation Sans" font-size="9" fill="#000">Z</text><text x="1342.5" y="390" font-family="Liberation Sans" font-size="8" fill="#000">Y</text><text x="1344.5" y="399" font-family="Liberation Sans" font-size="8" fill="#000">X</text>
</svg>
<svg class="a" style="left:426px;top:436px" width="458" height="269" viewBox="426 436 458 269">
 <circle cx="655" cy="585.5" r="51.6" fill="#d3d3d3" stroke="#111" stroke-width="1.7"/>
 <rect x="603" y="580" width="104" height="11" fill="#d3d3d3"/>
 <path d="M603 580 H707 M603 591 H707" stroke="#111" stroke-width="1.7"/>
 <path d="M603.5 580 V591 M706.5 580 V591" stroke="#111" stroke-width="1.2"/>
 <circle cx="872.5" cy="704.3" r="1" fill="#000"/><circle cx="876.5" cy="704.3" r="1" fill="#000"/>
</svg>
<svg class="a" style="left:892px;top:436px" width="457" height="269" viewBox="892 436 457 269">
 <defs>
  <linearGradient id="cylD" x1="0" y1="0" x2="0" y2="1"><stop offset="0" stop-color="#6e6e6e"/><stop offset=".25" stop-color="#9a9a9a"/><stop offset=".5" stop-color="#a0a0a0"/><stop offset=".8" stop-color="#7c7c7c"/><stop offset="1" stop-color="#3c3c3c"/></linearGradient>
  <linearGradient id="cylE" x1="0" y1="0" x2="0" y2="1"><stop offset="0" stop-color="#8a8a8a"/><stop offset=".5" stop-color="#a5a5a5"/><stop offset=".8" stop-color="#7a7a7a"/><stop offset="1" stop-color="#444"/></linearGradient>
 </defs>
 <g transform="translate(1064.5 639.7) rotate(-45)">
  <path d="M130 -42 H158 A26.3 42 0 0 1 158 42 H130Z" fill="url(#cylE)" stroke="#111" stroke-width="1.8"/>
  
  <ellipse cx="130" cy="0" rx="26.3" ry="42" fill="#a2a2a2" stroke="#111" stroke-width="1.8"/>
  <path d="M0 -21.6 H130 A13.6 21.6 0 0 1 130 21.6 H0Z" fill="url(#cylD)" stroke="#111" stroke-width="1.6"/>
  <ellipse cx="0" cy="0" rx="14" ry="21.6" fill="#9e9e9e" stroke="#111" stroke-width="1.8"/>
  <path d="M183.5 -17 L179.5 -15.5 L180.5 -6.5 L185.5 -5.5 Z" fill="#4b4a7e"/><path d="M183 -17.5 L179.5 -15.5 L180.5 -6.5 L185 -5.5" fill="none" stroke="#111" stroke-width="1.5"/>
 </g>
</svg>
<!-- title buttons -->
<div class="tb" style="left:824px"></div><div class="tb" style="left:844px"></div><div class="tb" style="left:864px"></div>
<svg class="a" style="left:824px;top:415px" width="58" height="18" viewBox="0 0 58 18"><rect x="4.5" y="11" width="8" height="2" fill="#111"/><rect x="24.5" y="5" width="8" height="8" fill="none" stroke="#111" stroke-width="1.6"/><path d="M45 5 L52 12 M52 5 L45 12" stroke="#111" stroke-width="2"/></svg>
<div class="tb o" style="left:1289px"></div><div class="tb o" style="left:1309px"></div><div class="tb o" style="left:1329px"></div>
<svg class="a" style="left:1289px;top:415px" width="58" height="18" viewBox="0 0 58 18"><rect x="4.5" y="11" width="8" height="2" fill="#fff"/><rect x="24.5" y="5" width="8" height="8" fill="none" stroke="#fff" stroke-width="1.6"/><path d="M45 5 L52 12 M52 5 L45 12" stroke="#fff" stroke-width="2"/></svg>
<!-- title icons -->
<svg class="a" style="left:428px;top:416px" width="16" height="15" viewBox="0 0 17 16"><use href="#fcicon"/></svg>
<svg class="a" style="left:894px;top:416px" width="16" height="15" viewBox="0 0 17 16"><use href="#fcicon"/></svg>
<div class="a" style="left:1352px;top:104px;width:1px;height:602px;background:#7c7975"></div>
<!-- scrollbar -->
<div class="a" style="left:1353px;top:104px;width:13px;height:634px;background:#f2f1f0"></div>
<div class="a" style="left:1353px;top:104px;width:13px;height:632px;border:1px solid #b9b5ae;border-radius:6px;background:#e4e2df"></div>
<div class="a" style="left:1353px;top:104px;width:13px;height:14px;border:1px solid #b9b5ae;border-bottom:none;border-radius:6px 6px 0 0;background:linear-gradient(90deg,#fafafa,#eeedeb)"></div>
<div class="a" style="left:1353px;top:117px;width:13px;height:10px;border:1px solid #b9b5ae;border-bottom:none;border-radius:6px 6px 0 0;background:#e4e2df"></div><svg class="a" style="left:1356px;top:109px" width="7" height="5"><path d="M1 4 L3.5 1.5 L6 4Z" fill="#5a5a5a"/></svg>
<div class="a" style="left:1353px;top:135px;width:13px;height:559px;border:1px solid #b9b5ae;border-radius:6px;background:linear-gradient(90deg,#fdfdfd,#ebe9e7)"></div>
<div class="a" style="left:1353px;top:724px;width:13px;height:13px;border:1px solid #b9b5ae;border-top:none;border-radius:0 0 6px 6px;background:linear-gradient(90deg,#fafafa,#eeedeb)"></div>
<div class="a" style="left:1353px;top:714px;width:13px;height:10px;border:1px solid #b9b5ae;border-top:none;border-radius:0 0 6px 6px;background:#e4e2df"></div><svg class="a" style="left:1356px;top:728px" width="7" height="5"><path d="M1 1 L3.5 3.5 L6 1Z" fill="#5a5a5a"/></svg>
<div class="a" style="left:1355px;top:425px;width:8px;height:7px;background:repeating-linear-gradient(#c9c5bf 0 1px,transparent 1px 3px)"></div>

<!-- tab bar -->
<div class="a" style="left:415px;top:738px;width:951px;height:1px;background:#d2cec8"></div>
<div class="a" style="left:645px;top:706px;width:224px;height:29px;border:1px solid #c4c0b9;border-top:none;border-left:none;border-radius:0 0 4px 0;background:linear-gradient(#e2e0dd,#f3f2f1)"></div>
<div class="a" style="left:869px;top:706px;width:224px;height:29px;border:1px solid #c4c0b9;border-top:none;border-left:none;border-radius:0 0 4px 0;background:linear-gradient(#e2e0dd,#f3f2f1)"></div>
<div class="a" style="left:1093px;top:706px;width:224px;height:29px;border:1px solid #c4c0b9;border-top:none;border-radius:0 0 4px 4px;background:linear-gradient(#e2e0dd,#f3f2f1)"></div>
<div class="a" style="left:422px;top:705px;width:224px;height:33px;border:1px solid #bcb8b1;border-top:none;border-radius:0 0 5px 5px;background:linear-gradient(#f2f1ef,#fdfdfd)"></div>
<svg class="a" style="left:430px;top:714px" width="15" height="14" viewBox="0 0 17 16"><use href="#fcicon"/></svg>
<svg class="a" style="left:653px;top:713px" width="15" height="14" viewBox="0 0 17 16"><use href="#fcicon"/></svg>
<svg class="a" style="left:877px;top:713px" width="15" height="14" viewBox="0 0 17 16"><use href="#fcicon"/></svg>
<svg class="a" style="left:1101px;top:713px" width="15" height="14" viewBox="0 0 17 16"><use href="#fcicon"/></svg>
<div class="t" style="left:453px;top:715px">M3x12-cylinder-head : 1</div>
<div class="t" style="left:676px;top:714px">M3x12-cylinder-head : 2</div>
<div class="t" style="left:900px;top:714px">M3x12-cylinder-head : 3</div>
<div class="t" style="left:1124px;top:714px">M3x12-cylinder-head : 4</div>
<svg class="a" style="left:620px;top:715px" width="14" height="14"><use href="#tabx"/></svg>
<svg class="a" style="left:843px;top:714px" width="14" height="14"><use href="#tabx"/></svg>
<svg class="a" style="left:1067px;top:714px" width="14" height="14"><use href="#tabx"/></svg>
<svg class="a" style="left:1291px;top:714px" width="14" height="14"><use href="#tabx"/></svg>

<!-- status -->
<div class="t" style="left:1245px;top:747px;letter-spacing:-.1px">24.24 x 15.93 mm</div>
</body></html>
